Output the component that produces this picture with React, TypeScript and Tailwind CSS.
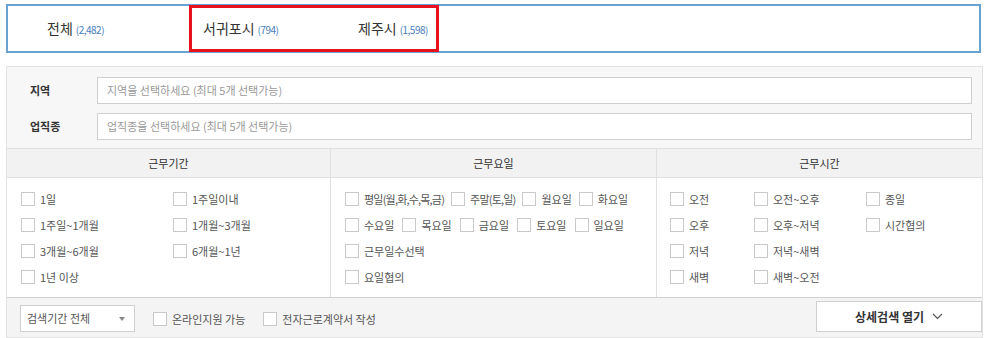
import React from 'react';

const font = { fontFamily: '"Noto Sans CJK KR", "Noto Sans", sans-serif' };

const Check = ({ label, className = '' }: { label: string; className?: string }) => (
    <label className={`flex items-center gap-[5px] text-[11px] leading-[14px] text-[#555] whitespace-nowrap ${className}`}>
        <span className="w-[14px] h-[14px] border border-[#c9c9c9] bg-white shrink-0" />
        <span>{label}</span>
    </label>
);

const App: React.FC = () => {
    return (
        <div className="w-[988px] h-[338px] bg-white overflow-hidden pt-[4px]" style={font}>
            {/* region tabs */}
            <div className="ml-[6px] w-[975px] h-[49px] border-2 border-[#6aa3d2] flex items-center">
                <div className="w-[181px] pl-[39px] flex items-baseline gap-[3px]">
                    <span className="text-[14px] text-[#333]">전체</span>
                    <span className="text-[10px] text-[#4a7ec0] tracking-[-0.5px]">(2,482)</span>
                </div>
                <div className="w-[250px] h-[47px] border-[3px] border-[#e8121e] flex items-center -my-[1px]">
                    <div className="w-[166px] pl-[11px] flex items-baseline gap-[3px]">
                        <span className="text-[14px] text-[#333]">서귀포시</span>
                        <span className="text-[10px] text-[#4a7ec0] tracking-[-0.5px]">(794)</span>
                    </div>
                    <div className="flex items-baseline gap-[3px]">
                        <span className="text-[14px] text-[#333]">제주시</span>
                        <span className="text-[10px] text-[#4a7ec0] tracking-[-0.5px]">(1,598)</span>
                    </div>
                </div>
            </div>

            {/* search panel */}
            <div className="ml-[6px] mt-[13px] w-[977px] border border-[#e3e3e3] bg-[#f7f7f7]">
                <div className="pt-[10px] pb-[8px] pr-[10px] flex flex-col gap-[9px]">
                    <div className="flex items-center">
                        <span className="w-[90px] pl-[23px] text-[11px] font-bold text-[#333]">지역</span>
                        <div className="flex-1 h-[27px] border border-[#cfcfcf] bg-white flex items-center pl-[9px] text-[11px] text-[#999]">
                            지역을 선택하세요 (최대 5개 선택가능)
                        </div>
                    </div>
                    <div className="flex items-center">
                        <span className="w-[90px] pl-[23px] text-[11px] font-bold text-[#333]">업직종</span>
                        <div className="flex-1 h-[27px] border border-[#cfcfcf] bg-white flex items-center pl-[9px] text-[11px] text-[#999]">
                            업직종을 선택하세요 (최대 5개 선택가능)
                        </div>
                    </div>
                </div>

                <div className="grid grid-cols-[324px_326px_1fr] border-t border-[#e0e0e0]">
                    {['근무기간', '근무요일', '근무시간'].map((h, i) => (
                        <div
                            key={h}
                            className={`h-[29px] bg-[#f2f2f3] border-b border-[#e0e0e0] flex items-center justify-center text-[11px] text-[#333] ${i < 2 ? 'border-r' : ''}`}
                        >
                            {h}
                        </div>
                    ))}

                    <div className="h-[119px] bg-white border-r border-[#e0e0e0] pl-[14px] pt-[14px] grid grid-cols-[152px_1fr] gap-y-[12px] content-start">
                        <Check label="1일" />
                        <Check label="1주일이내" />
                        <Check label="1주일~1개월" />
                        <Check label="1개월~3개월" />
                        <Check label="3개월~6개월" />
                        <Check label="6개월~1년" />
                        <Check label="1년 이상" />
                    </div>

                    <div className="h-[119px] bg-white border-r border-[#e0e0e0] pl-[14px] pt-[14px] flex flex-col gap-[12px]">
                        <div className="flex gap-[7px]">
                            <Check label="평일(월,화,수,목,금)" className="tracking-[-0.8px]" />
                            <Check label="주말(토,일)" className="tracking-[-0.8px]" />
                            <Check label="월요일" />
                            <Check label="화요일" />
                        </div>
                        <div className="flex gap-[8px]">
                            <Check label="수요일" />
                            <Check label="목요일" />
                            <Check label="금요일" />
                            <Check label="토요일" />
                            <Check label="일요일" />
                        </div>
                        <Check label="근무일수선택" />
                        <Check label="요일협의" />
                    </div>

                    <div className="h-[119px] bg-white pl-[13px] pt-[14px] grid grid-cols-[84px_112px_1fr] gap-y-[12px] content-start">
                        <Check label="오전" />
                        <Check label="오전~오후" />
                        <Check label="종일" />
                        <Check label="오후" />
                        <Check label="오후~저녁" />
                        <Check label="시간협의" />
                        <Check label="저녁" />
                        <Check label="저녁~새벽" />
                        <span />
                        <Check label="새벽" />
                        <Check label="새벽~오전" />
                        <span />
                    </div>
                </div>

                <div className="h-[40px] border-t border-[#cfcfcf] bg-[#f4f4f4] flex items-start pl-[13px]">
                    <div className="mt-[7px] w-[115px] h-[27px] border border-[#cfcfcf] bg-white flex items-center justify-between pl-[6px] pr-[9px] text-[11px] text-[#555]">
                        <span>검색기간 전체</span>
                        <span className="w-0 h-0 border-l-[3px] border-r-[3px] border-t-[4px] border-l-transparent border-r-transparent border-t-[#888]" />
                    </div>
                    <div className="mt-[14px] ml-[18px] flex gap-[18px]">
                        <Check label="온라인지원 가능" />
                        <Check label="전자근로계약서 작성" />
                    </div>
                    <div className="ml-auto mt-[3px] w-[166px] h-[31px] border border-[#cfcfcf] bg-white flex items-center justify-center gap-[8px] text-[12px] font-bold text-[#333]">
                        <span>상세검색 열기</span>
                        <svg width="11" height="7" viewBox="0 0 11 7" fill="none" stroke="#555" strokeWidth="1.2">
                            <path d="M1 1l4.5 4.5L10 1" />
                        </svg>
                    </div>
                </div>
            </div>
        </div>
    );
};

export default App;
